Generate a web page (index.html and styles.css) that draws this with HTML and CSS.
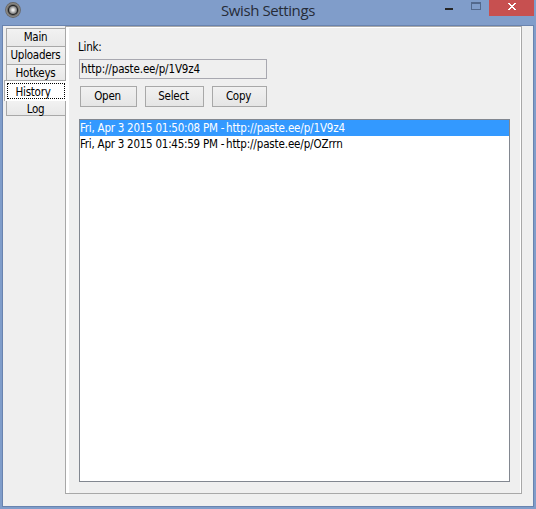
FILE: index.html
```
<!DOCTYPE html>
<html lang="en">
<head>
<meta charset="utf-8">
<title>Swish Settings</title>
<link rel="stylesheet" href="styles.css">
</head>
<body>
<div class="window">
  <header class="titlebar">
    <svg class="app-icon" width="16" height="16" viewBox="0 0 16 16">
      <defs><radialGradient id="lens"><stop offset="0" stop-color="#fff"/><stop offset=".4" stop-color="#d0d0d0"/><stop offset="1" stop-color="#777"/></radialGradient></defs>
      <circle cx="8" cy="8" r="7.9" fill="#666"/>
      <circle cx="8" cy="8" r="6.5" fill="none" stroke="#8c8984" stroke-width="1.2"/>
      <circle cx="8" cy="8" r="5.1" fill="#222"/>
      <circle cx="8" cy="8" r="4" fill="url(#lens)"/>
    </svg>
    <h1 class="title"><span>Swish Settings</span></h1>
    <div class="controls">
      <svg width="44" height="16" viewBox="0 0 44 16" shape-rendering="crispEdges"><path d="M0 8h8v2H0z" fill="#262626"/><path d="M26 2h10v8H26zM27 4v5h8V4z" fill="#53698d" fill-rule="evenodd"/></svg>
      <button class="close" aria-label="Close"><svg width="8" height="7" viewBox="0 0 8 7" shape-rendering="crispEdges"><path fill="#fff" d="M0 0h2v1h1v1h2V1h1V0h2v1H7v1H6v1H5v1h1v1h1v1h1v1H6V6H5V5H3v1H2v1H0V6h1V5h1V4h1V3H2V2H1V1H0z"/></svg></button>
    </div>
  </header>
  <main class="client">
    <nav class="tabs">
      <a class="tab main">Main</a>
      <a class="tab uploaders">Uploaders</a>
      <a class="tab hotkeys">Hotkeys</a>
      <a class="tab active"><span class="focus">History</span></a>
      <a class="tab log">Log</a>
    </nav>
    <section class="panel">
      <label class="label" for="link">Link:</label>
      <div class="field" id="link"><span class="url">http://paste.ee/p/1V9z4</span></div>
      <div class="buttons">
        <button class="btn open">Open</button>
        <button class="btn select">Select</button>
        <button class="btn copy">Copy</button>
      </div>
      <ul class="history">
        <li class="selected"><span class="date">Fri, Apr 3 2015 01:50:08 PM -</span><span class="url">http://paste.ee/p/1V9z4</span></li>
        <li><span class="date">Fri, Apr 3 2015 01:45:59 PM -</span><span class="url">http://paste.ee/p/OZrrn</span></li>
      </ul>
    </section>
  </main>
</div>
</body>
</html>
```
FILE: styles.css
```
* { box-sizing: border-box; }
body { margin: 0; background: #809dca; color: #000; font: 11.5px/16px "DejaVu Sans Condensed", "DejaVu Sans", sans-serif; font-stretch: condensed; letter-spacing: -.25px; }
button { font: inherit; letter-spacing: inherit; color: inherit; padding: 0; }
.window { width: 536px; height: 509px; display: flex; flex-direction: column; padding: 0 2px 2px; overflow: hidden; }
.titlebar { height: 25px; flex: none; display: grid; grid-template-columns: 16px 1fr 89px; padding-left: 3px; }
.app-icon { margin-top: 2px; }
.title { margin: 0; padding-left: 200px; font: 15px/21px "Open Sans", sans-serif; color: #262c38; white-space: nowrap; letter-spacing: -.4px; }
.controls { display: flex; justify-content: space-between; height: 16px; }
.close { width: 45px; height: 16px; border: 0; background: #c75050; display: flex; justify-content: center; padding-top: 3px; }
.client { flex: 1; display: flex; border: 1px solid #6983af; background: #efefef; }
.tabs { width: 62px; flex: none; padding: 2px 0 0 3px; }
.tab { display: block; height: 18px; border: 1px solid #a8a8a8; border-right: 0; border-bottom: 0; padding-right: 1px; text-align: center; background: linear-gradient(#f2f2f2, #e8e8e8); line-height: 17px; white-space: nowrap; }
.tab.hotkeys { height: 16px; }
.tab.active { height: 21px; margin-left: -2px; width: 62px; padding: 2px 1px 2px 2px; background: #fff; position: relative; }
.focus { display: block; height: 16px; border: 1px dotted #000; line-height: 16px; padding-right: 6px; }
.tab.log { height: 15px; border-top: 0; border-bottom: 1px solid #a8a8a8; line-height: 17px; }
.panel { width: 457px; height: 468px; border: 1px solid #a8a8a8; box-shadow: inset 3px 0 #fff, inset 0 1px #fff, inset -1px 0 #fff; padding: 12px 11px 11px 13px; }
.label { display: block; height: 20px; margin-left: -1px; }
.field { width: 188px; height: 20px; border: 1px solid #a8a8b0; padding-left: 1px; line-height: 19px; }
.buttons { display: flex; gap: 8px; margin: 7px 0 12px 1px; }
.btn { height: 21px; border: 1px solid #a8a8a8; background: linear-gradient(#f1f1f1, #e5e5e5); line-height: 19px; padding-right: 2px; }
.open { width: 57px; }
.select { width: 59px; }
.copy { width: 55px; }
.history { list-style: none; margin: 0; padding: 0; width: 431px; height: 363px; border: 1px solid #828790; background: #fff; }
.history li { display: flex; height: 16px; line-height: 17px; white-space: nowrap; }
.date { width: 146px; }
.url { letter-spacing: -.14px; }
.history .selected { background: #3399ff; color: #fff; }
```
